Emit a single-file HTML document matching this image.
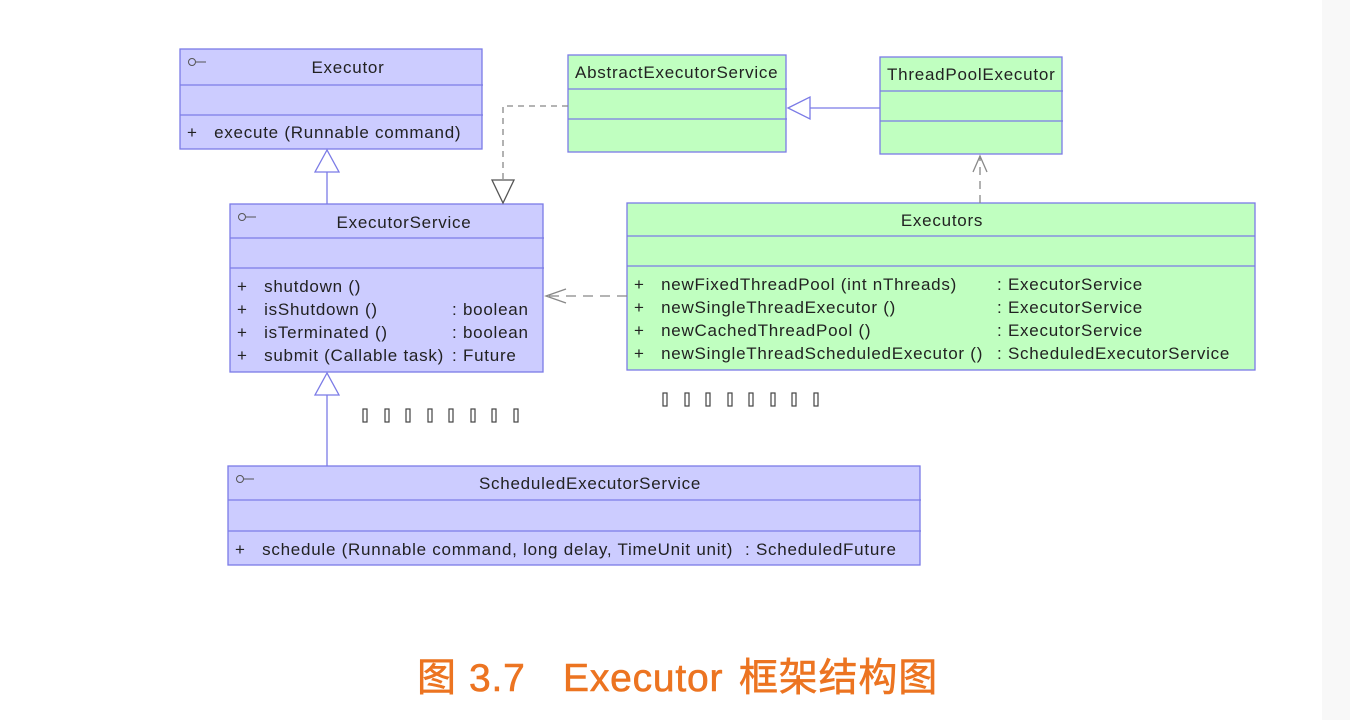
<!DOCTYPE html>
<html><head><meta charset="utf-8"><style>
html,body{margin:0;padding:0;background:#fff;width:1350px;height:720px;overflow:hidden}
svg text{font-family:"Liberation Sans",sans-serif;font-size:17px;letter-spacing:0.75px;fill:#222}
svg text.cap{font-family:"Liberation Sans","Noto Sans CJK SC",sans-serif;font-size:39px;letter-spacing:0.8px;fill:#ec7421;stroke:#ec7421;stroke-width:0.6}
</style></head><body>
<svg width="1350" height="720" xmlns="http://www.w3.org/2000/svg">
<rect x="1322" y="0" width="28" height="720" fill="#f8f8f8"/>
<g stroke="#7b7be6" stroke-width="1.3">
<rect x="180" y="49" width="302" height="100" fill="#ccccff"/>
<line x1="180" y1="85" x2="483" y2="85"/><line x1="180" y1="115" x2="483" y2="115"/>
<rect x="230" y="204" width="313" height="168" fill="#ccccff"/>
<line x1="230" y1="238" x2="544" y2="238"/><line x1="230" y1="268" x2="544" y2="268"/>
<rect x="228" y="466" width="692" height="99" fill="#ccccff"/>
<line x1="228" y1="500" x2="921" y2="500"/><line x1="228" y1="531" x2="921" y2="531"/>
<rect x="568" y="55" width="218" height="97" fill="#c0ffc0"/>
<line x1="568" y1="89" x2="787" y2="89"/><line x1="568" y1="119" x2="787" y2="119"/>
<rect x="880" y="57" width="182" height="97" fill="#c0ffc0"/>
<line x1="880" y1="91" x2="1063" y2="91"/><line x1="880" y1="121" x2="1063" y2="121"/>
<rect x="627" y="203" width="628" height="167" fill="#c0ffc0"/>
<line x1="627" y1="236" x2="1255" y2="236"/><line x1="627" y1="266" x2="1255" y2="266"/>
<line x1="327" y1="204" x2="327" y2="172"/>
<polygon points="327,150 315,172 339,172" fill="#fff"/>
<line x1="327" y1="466" x2="327" y2="395"/>
<polygon points="327,373 315,395 339,395" fill="#fff"/>
<line x1="880" y1="108" x2="810" y2="108"/>
<polygon points="788,108 810,97 810,119" fill="#fff"/>
</g>
<g stroke="#888" stroke-width="1.3" fill="none">
<path d="M568 106 H503 V182" stroke-dasharray="6,5"/>
<polygon points="492,180 514,180 503,203" fill="#fff" stroke="#555"/>
<path d="M627 296 H548" stroke-dasharray="10,7"/>
<path d="M566 289 L546 296 L566 303"/>
<path d="M980 203 V158" stroke-dasharray="8,6"/>
<path d="M973 172 L980 156 L987 172"/>
</g>
<g fill="none" stroke="#555" stroke-width="1">
<circle cx="192" cy="62" r="3.5"/><line x1="196" y1="62" x2="206" y2="62"/>
<circle cx="242" cy="217" r="3.5"/><line x1="246" y1="217" x2="256" y2="217"/>
<circle cx="240" cy="479" r="3.5"/><line x1="244" y1="479" x2="254" y2="479"/>
</g>
<text x="348" y="73" text-anchor="middle">Executor</text>
<text x="187" y="138">+&#160;&#160;&#160;execute (Runnable command)</text>
<text x="404" y="228" text-anchor="middle">ExecutorService</text>
<text x="237" y="292">+&#160;&#160;&#160;shutdown ()</text>
<text x="237" y="315">+&#160;&#160;&#160;isShutdown ()</text><text x="452" y="315">: boolean</text>
<text x="237" y="338">+&#160;&#160;&#160;isTerminated ()</text><text x="452" y="338">: boolean</text>
<text x="237" y="361">+&#160;&#160;&#160;submit (Callable task)</text><text x="452" y="361">: Future</text>
<text x="575" y="78">AbstractExecutorService</text>
<text x="887" y="80">ThreadPoolExecutor</text>
<text x="942" y="226" text-anchor="middle">Executors</text>
<text x="634" y="290">+&#160;&#160;&#160;newFixedThreadPool (int nThreads)</text><text x="997" y="290">: ExecutorService</text>
<text x="634" y="313">+&#160;&#160;&#160;newSingleThreadExecutor ()</text><text x="997" y="313">: ExecutorService</text>
<text x="634" y="336">+&#160;&#160;&#160;newCachedThreadPool ()</text><text x="997" y="336">: ExecutorService</text>
<text x="634" y="359">+&#160;&#160;&#160;newSingleThreadScheduledExecutor ()</text><text x="997" y="359">: ScheduledExecutorService</text>
<text x="590" y="489" text-anchor="middle">ScheduledExecutorService</text>
<text x="235" y="555">+&#160;&#160;&#160;schedule (Runnable command, long delay, TimeUnit unit)</text><text x="745" y="555">: ScheduledFuture</text>
<g fill="none" stroke="#444" stroke-width="1.2">
<rect x="363" y="409" width="4" height="13"/><rect x="385" y="409" width="4" height="13"/><rect x="406" y="409" width="4" height="13"/><rect x="428" y="409" width="4" height="13"/><rect x="449" y="409" width="4" height="13"/><rect x="471" y="409" width="4" height="13"/><rect x="492" y="409" width="4" height="13"/><rect x="514" y="409" width="4" height="13"/>
<rect x="663" y="393" width="4" height="13"/><rect x="685" y="393" width="4" height="13"/><rect x="706" y="393" width="4" height="13"/><rect x="728" y="393" width="4" height="13"/><rect x="749" y="393" width="4" height="13"/><rect x="771" y="393" width="4" height="13"/><rect x="792" y="393" width="4" height="13"/><rect x="814" y="393" width="4" height="13"/>
</g>
<text class="cap" x="417" y="691">图</text>
<text class="cap" x="469" y="691">3.7</text>
<text class="cap" x="563" y="691">Executor</text>
<text class="cap" x="739" y="691">框架结构图</text>
</svg>
</body></html>
